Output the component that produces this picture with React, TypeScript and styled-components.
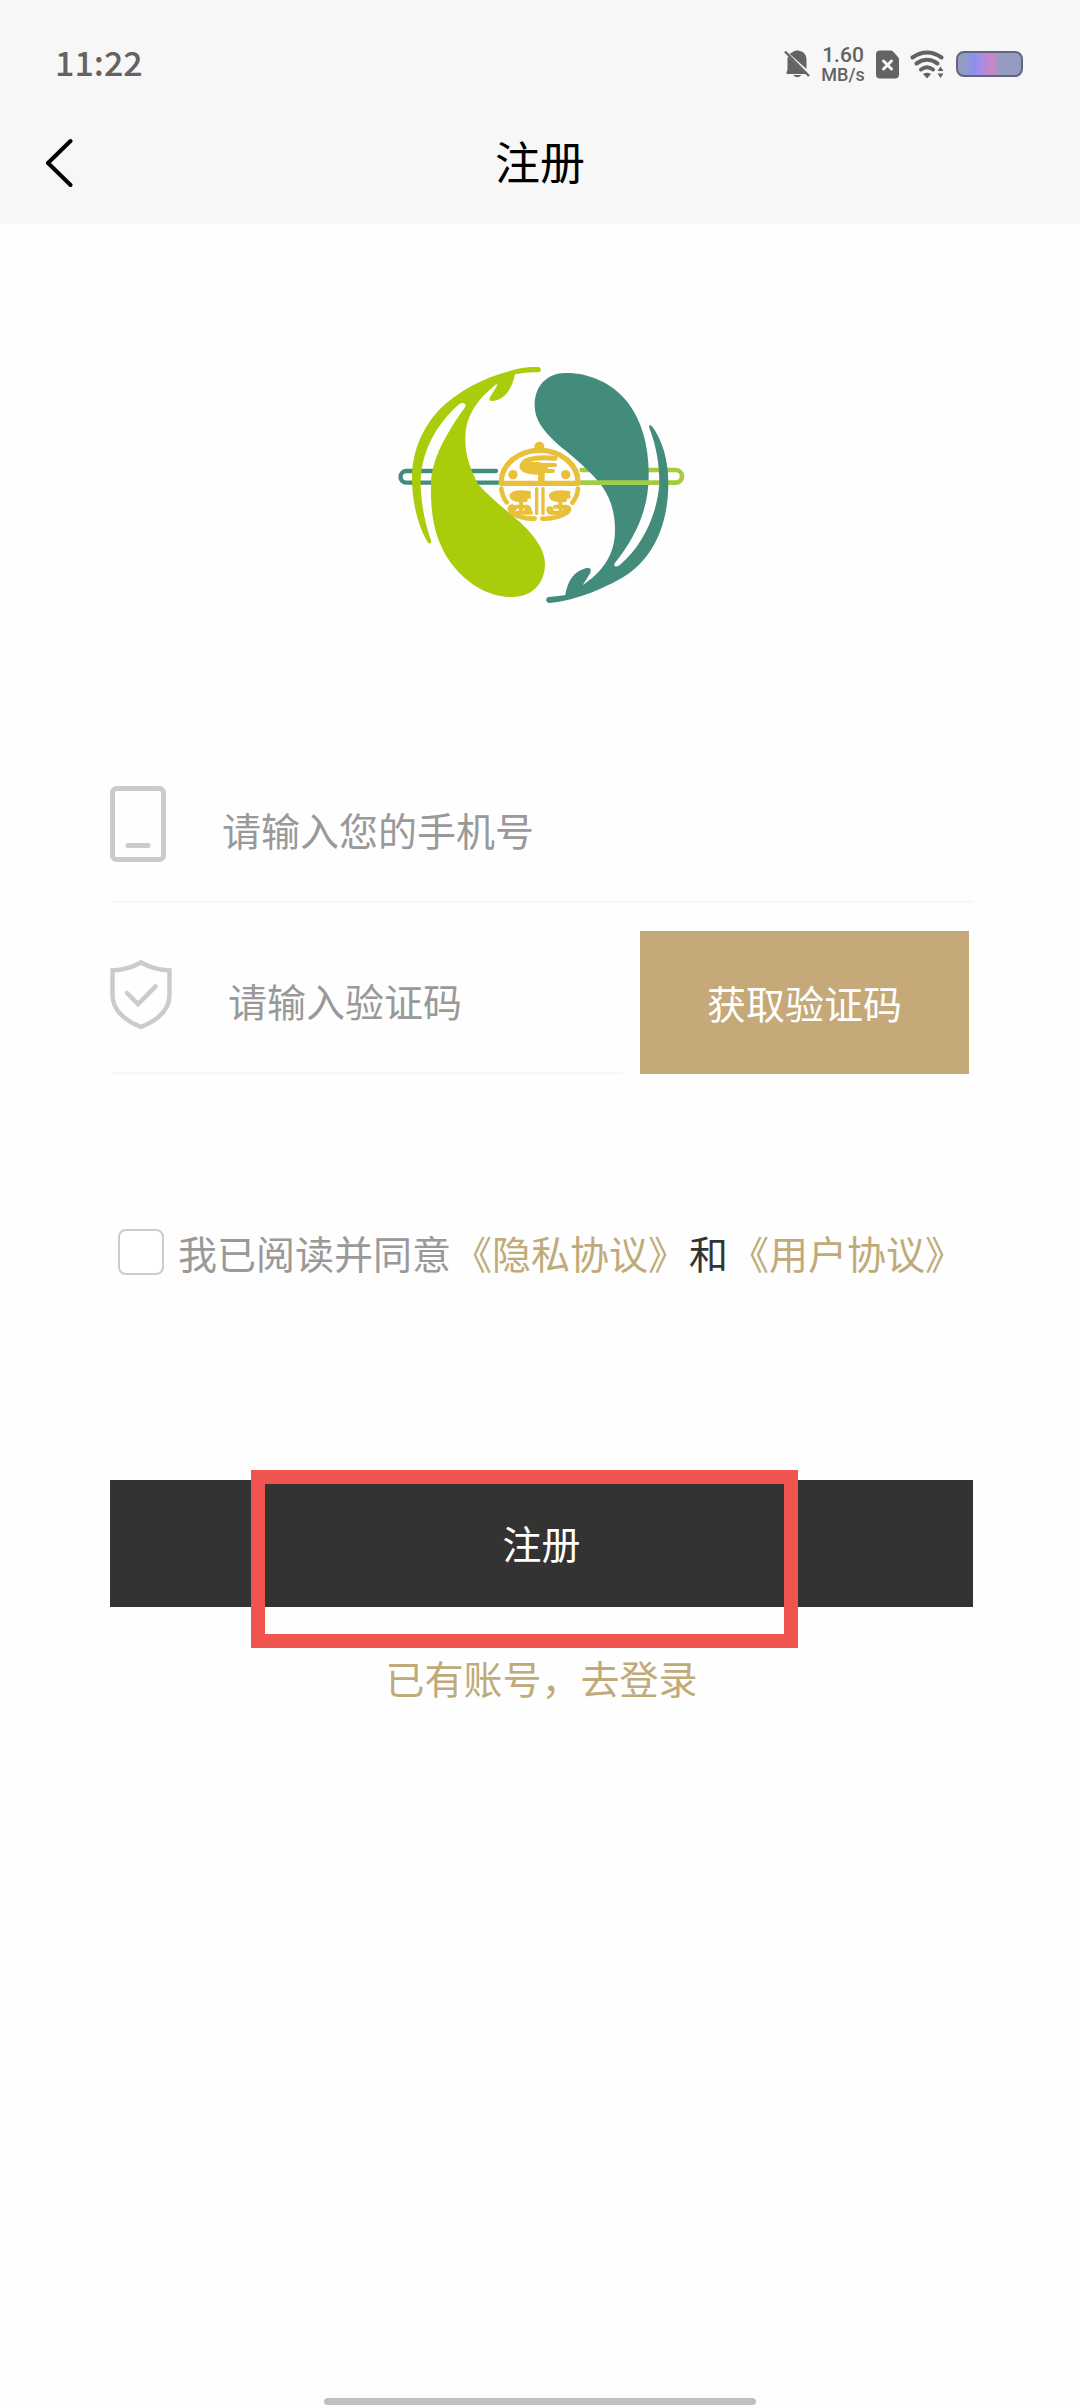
import { useState } from "react";
import styled, { createGlobalStyle } from "styled-components";

const GlobalStyle = createGlobalStyle`
  * {
    box-sizing: border-box;
  }

  body {
    margin: 0;
    background: #fefefe;
    font-family: "Noto Sans CJK SC", sans-serif;
  }

  button,
  input {
    font-family: inherit;
  }
`;

const Page = styled.div`
  display: flex;
  flex-direction: column;
  min-height: 100vh;
`;

const Header = styled.header`
  background: #f7f7f7;
`;

const StatusBar = styled.div`
  display: flex;
  align-items: center;
  justify-content: space-between;
  height: 102px;
  padding: 26px 57px 0 55px;
  color: #636363;
`;

const Time = styled.span`
  padding-bottom: 4px;
  font-size: 34px;
  font-weight: 500;
  line-height: 40px;
`;

const StatusIcons = styled.div`
  display: flex;
  align-items: center;
  gap: 11px;

  svg {
    display: block;
  }
`;

const Speed = styled.div`
  display: flex;
  flex-direction: column;
  align-items: center;
  width: 44px;
  padding-top: 2px;
  font-family: Roboto, sans-serif;
  font-weight: 500;
`;

const SpeedText = styled.span<{ size: number }>`
  font-size: ${({ size }) => size}px;
  line-height: 20px;
`;

const Battery = styled.div`
  width: 67px;
  height: 26px;
  border: 2px solid #63647f;
  border-radius: 8px;
  background: linear-gradient(
    90deg,
    #929dc4 10%,
    #8f8ff0 26%,
    #b08be0 42%,
    #cf85c4 54%,
    #949cc4 66%
  );
`;

const NavBar = styled.div`
  display: grid;
  grid-template-columns: 1fr auto 1fr;
  align-items: center;
  height: 122px;
  padding: 0 37px;
`;

const BackButton = styled.button`
  justify-self: start;
  padding: 8px;
  border: none;
  background: none;
  cursor: pointer;

  svg {
    display: block;
  }
`;

const Title = styled.h1`
  margin: 0;
  padding-bottom: 4px;
  color: #000;
  font-size: 45px;
  font-weight: 400;
  line-height: 60px;
`;

const Main = styled.main`
  display: flex;
  flex: 1;
  flex-direction: column;
  padding: 126px 107px 0 110px;
`;

const LogoWrap = styled.div`
  display: flex;
  justify-content: center;
  margin-bottom: 140px;
  padding-right: 5px;

  svg {
    display: block;
  }
`;

const Form = styled.form`
  display: flex;
  flex-direction: column;
`;

const Field = styled.div`
  display: flex;
  align-items: center;
  gap: 56px;
  height: 143px;
  border-bottom: 2px solid #f7f7f7;

  label {
    padding-bottom: 14px;
  }

  svg {
    display: block;
  }
`;

const CodeRow = styled.div`
  display: flex;
  align-items: flex-end;
  gap: 18px;
  margin: 28px 4px 0 0;

  ${Field} {
    flex: 1;
    min-width: 0;
  }
`;

const TextInput = styled.input`
  flex: 1;
  min-width: 0;
  height: 60px;
  padding: 0 0 3px;
  border: none;
  outline: none;
  background: transparent;
  color: #333;
  font-size: 39px;

  &::placeholder {
    color: #999;
    opacity: 1;
  }
`;

const CodeButton = styled.button`
  flex-shrink: 0;
  width: 329px;
  height: 143px;
  padding: 0 0 2px;
  border: none;
  background: #c5a979;
  color: #fff;
  font-size: 39px;
  cursor: pointer;
`;

const Agreement = styled.div`
  display: flex;
  align-items: center;
  gap: 2px;
  margin: 148px 0 198px;
  padding-left: 8px;
  font-size: 39px;
  line-height: 60px;
  white-space: nowrap;
`;

const Checkbox = styled.input`
  appearance: none;
  width: 46px;
  height: 46px;
  margin: 0 12px 0 0;
  border: 2px solid #ccc;
  border-radius: 8px;
  background: #fff;

  &:checked {
    background: #c5a979;
  }
`;

const AgreeLabel = styled.label`
  color: #999;
`;

const And = styled.span`
  color: #333;
`;

const GoldLink = styled.a`
  color: #c1aa79;
  text-decoration: none;
`;

const SubmitArea = styled.div`
  position: relative;
`;

const SubmitButton = styled.button`
  display: block;
  width: 100%;
  height: 127px;
  padding: 0 0 4px;
  border: none;
  background: #333;
  color: #fff;
  font-size: 39px;
  cursor: pointer;
`;

const Highlight = styled.div`
  position: absolute;
  top: -10px;
  right: 175px;
  bottom: -41px;
  left: 141px;
  border: 14px solid #f0544e;
  pointer-events: none;
`;

const LoginLink = styled(GoldLink)`
  align-self: center;
  margin-top: 40px;
  font-size: 39px;
  line-height: 60px;
`;

const HomeBar = styled.div`
  align-self: center;
  width: 40%;
  height: 7px;
  margin-bottom: 3px;
  border-radius: 4px;
  background: #c0c0c0;
`;

const MutedBell = () => (
  <svg width="26" height="30" viewBox="0 0 26 30" fill="#636363">
    <path d="M8 3.500C9.200 2.600 10.600 2 12 1.800Q13.500 0.500 15 1.800C20 2.600 22.500 6 22.500 11V20L5.500 4.800Z" />
    <path d="M3.500 9Q4 7.500 4.500 7.500L22 25H3Q1.500 24 3 22L3.500 20.500Z" />
    <path d="M9 26H17.500Q13.500 30.500 9 26Z" />
    <path d="M1 2.500L25 27" stroke="#636363" strokeWidth="2.400" />
  </svg>
);

const NoSim = () => (
  <svg width="23" height="29" viewBox="0 0 23 29">
    <path
      d="M4 0.500H14.500Q16 0.500 17 1.500L22 7Q23 8 23 9.500V24.500Q23 28.500 19 28.500H4Q0 28.500 0 24.500V4.500Q0 0.500 4 0.500Z"
      fill="#636363"
    />
    <path d="M7.500 11L15.500 19M15.500 11L7.500 19" stroke="#f7f7f7" strokeWidth="3" strokeLinecap="round" />
  </svg>
);

const Wifi = () => (
  <svg width="35" height="29" viewBox="0 0 35 29" fill="none" stroke="#636363">
    <path d="M2.500 7.500Q17 -2.500 31.500 7.500" strokeWidth="4" strokeLinecap="round" />
    <path d="M6.500 13.500Q17 6 27.500 13.500" strokeWidth="4" strokeLinecap="round" />
    <path d="M11 19.500Q17 15 23 19.500" strokeWidth="4" strokeLinecap="round" />
    <path d="M13 24Q17 21.500 21 24L17 28.500Z" fill="#636363" stroke="none" />
    <path d="M27.500 21L30.500 16.500L33.500 21ZM27.500 23.500H33.500L30.500 28Z" fill="#636363" stroke="none" />
  </svg>
);

const BackIcon = () => (
  <svg width="28" height="50" viewBox="0 0 28 50" fill="none">
    <path d="M25.500 3L3 25L25.500 47" stroke="#000" strokeWidth="4" strokeLinecap="round" strokeLinejoin="round" />
  </svg>
);

const PhoneIcon = () => (
  <svg width="56" height="76" viewBox="0 0 56 76" fill="none" stroke="#cbcbcb" strokeWidth="5">
    <rect x="2.500" y="2.500" width="51" height="71" rx="4" />
    <path d="M18 59.500H38" strokeLinecap="round" />
  </svg>
);

const ShieldIcon = () => (
  <svg width="62" height="70" viewBox="0 0 62 70" fill="none" stroke="#cbcbcb" strokeWidth="4.500">
    <path d="M31 2.500C23 7 14 10 2.500 10.500V35C2.500 50 14 60 31 67C48 60 59.500 50 59.500 35V10.500C48 10 39 7 31 2.500Z" />
    <path d="M17 33L28 44L45.500 26.500" strokeLinecap="round" />
  </svg>
);

const Logo = () => (
  <svg width="320" height="270" viewBox="0 0 960 810" fill="none" strokeLinecap="round">
    <path d="M351 363H82A17.500 17.500 0 0 0 82 398H364" stroke="#438b7a" strokeWidth="13" />
    <path d="M608 360H890A19 19 0 0 1 890 398H820" stroke="#a2cd3c" strokeWidth="14" />
    <path
      fill="#a9cd0a"
      d="M478 51C440 50 414 56 392 63C310 85 235 125 180 180C120 245 98 320 99 390C100 460 118 530 146 576C150 584 158 580 156 572C135 510 125 450 125 395C128 305 168 228 240 163C252 154 264 160 258 172C205 245 166 315 157 380C152 470 160 560 213 635C262 700 325 741 402 741C458 741 498 700 498 642C498 602 470 560 425 518C384 482 336 446 297 402C270 350 258 310 259 265C258 205 290 150 352 103C358 104 350 115 335 138C328 148 332 154 340 153C380 150 400 112 408 73C435 68 460 67 478 67C488 66 488 52 478 51Z"
    />
    <path
      fill="#438b7a"
      d="M560 69C508 68 467 105 467 165C467 215 500 250 545 290C590 325 640 370 668 407C700 450 708 500 708 540C708 600 685 655 612 705C613 700 625 685 634 668C638 655 632 652 620 655C585 665 566 692 559 735C540 739 520 740 508 741C498 745 500 759 512 759C545 757 575 748 595 742C640 728 690 706 730 683C815 633 868 535 868 400C868 330 850 270 820 230C812 222 808 226 812 236C832 290 841 340 841 400C836 490 790 590 722 645C708 655 700 648 710 636C770 560 808 480 809 380C811 290 788 212 746 157C700 98 628 68 560 69Z"
    />
    <path d="M604 398H814" stroke="#9fce4a" strokeWidth="14" />
    <g stroke="#e9c03a" strokeWidth="16">
      <path d="M367 396A115 95 0 0 1 597 396" />
      <path d="M367 400H597" />
      <path d="M367 416Q370 440 383 457M597 416Q595 440 580 458" strokeWidth="14" />
      <path d="M397 488Q428 507 467 506M490 506Q532 508 565 487" strokeWidth="14" />
      <path d="M473 416V490M492 416V490" strokeWidth="10" />
      <path d="M528 325Q470 319 440 333Q418 352 440 361Q455 368 478 366" strokeWidth="15" />
      <path d="M470 345H528M480 363H522" strokeWidth="12" />
      <path d="M440 343H480M438 353H500" strokeWidth="14" />
      <path d="M487 355V394" strokeWidth="20" />
      <g strokeWidth="10">
        <path d="M450 429Q405 424 398 436Q398 449 422 450H440M405 440H450" strokeWidth="13" />
        <path d="M426 450V484M412 470H446M414 488H456" strokeWidth="12" />
        <circle cx="399" cy="476" r="8" fill="#e9c03a" />
        <circle cx="447" cy="480" r="6" fill="#e9c03a" />
      </g>
      <g strokeWidth="10">
        <path d="M568 429Q523 424 516 436Q516 449 540 450H558M523 440H568" strokeWidth="13" />
        <path d="M544 450V484M528 470H562M514 488H556" strokeWidth="12" />
        <circle cx="513" cy="480" r="6" fill="#e9c03a" />
        <circle cx="564" cy="478" r="8" fill="#e9c03a" />
      </g>
    </g>
    <g fill="#e9c03a">
      <circle cx="481" cy="290" r="15" />
      <circle cx="402" cy="374" r="14" />
      <circle cx="560" cy="374" r="14" />
    </g>
  </svg>
);

export default function App() {
  const [agreed, setAgreed] = useState(false);

  return (
    <Page>
      <GlobalStyle />
      <Header>
        <StatusBar>
          <Time>11:22</Time>
          <StatusIcons>
            <MutedBell />
            <Speed>
              <SpeedText size={21}>1.60</SpeedText>
              <SpeedText size={18}>MB/s</SpeedText>
            </Speed>
            <NoSim />
            <Wifi />
            <Battery />
          </StatusIcons>
        </StatusBar>
        <NavBar>
          <BackButton type="button" aria-label="返回">
            <BackIcon />
          </BackButton>
          <Title>注册</Title>
        </NavBar>
      </Header>

      <Main>
        <LogoWrap>
          <Logo />
        </LogoWrap>
        <Form onSubmit={(e) => e.preventDefault()}>
          <Field>
            <label htmlFor="phone" aria-label="手机号">
              <PhoneIcon />
            </label>
            <TextInput id="phone" type="tel" placeholder="请输入您的手机号" />
          </Field>
          <CodeRow>
            <Field>
              <label htmlFor="code" aria-label="验证码">
                <ShieldIcon />
              </label>
              <TextInput id="code" type="text" placeholder="请输入验证码" />
            </Field>
            <CodeButton type="button">获取验证码</CodeButton>
          </CodeRow>
          <Agreement>
            <Checkbox
              id="agree"
              type="checkbox"
              checked={agreed}
              onChange={(e) => setAgreed(e.target.checked)}
            />
            <AgreeLabel htmlFor="agree">我已阅读并同意</AgreeLabel>
            <GoldLink href="#privacy">《隐私协议》</GoldLink>
            <And>和</And>
            <GoldLink href="#terms">《用户协议》</GoldLink>
          </Agreement>
          <SubmitArea>
            <SubmitButton type="submit">注册</SubmitButton>
            <Highlight />
          </SubmitArea>
          <LoginLink href="#login">已有账号，去登录</LoginLink>
        </Form>
      </Main>
      <HomeBar />
    </Page>
  );
}
